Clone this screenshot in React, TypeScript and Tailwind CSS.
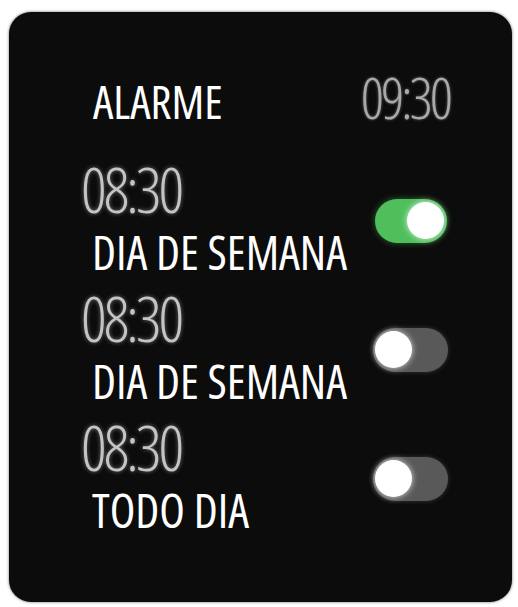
type Alarm = { time: string; label: string; on: boolean };

const alarms: Alarm[] = [
  { time: "08:30", label: "DIA DE SEMANA", on: true },
  { time: "08:30", label: "DIA DE SEMANA", on: false },
  { time: "08:30", label: "TODO DIA", on: false },
];

function Toggle({ on }: { on: boolean }) {
  return (
    <div
      className={
        on
          ? "mt-[9px] mr-[1px] flex h-[44px] w-[72px] items-center justify-end rounded-full bg-[#4fbf5c] px-[3px] shadow-[0_0_6px_rgba(80,190,90,0.5)]"
          : "mt-[9px] flex h-[44px] w-[75px] items-center justify-start rounded-full bg-[#595959] px-[2px] shadow-[0_0_5px_rgba(120,120,120,0.4)]"
      }
    >
      <div className="h-[37px] w-[37px] rounded-full bg-white shadow-[0_0_6px_rgba(255,255,255,0.8)]" />
    </div>
  );
}

export default function App() {
  return (
    <div className="min-h-[607px] w-[518px] bg-white pl-[9px] pt-[12px] font-['Open_Sans',sans-serif]">
      <div className="flex h-[590px] w-[503px] flex-col rounded-[22px] bg-[#0c0c0c] pl-[83px] pr-[64px] shadow-[0_0_3px_rgba(0,0,0,0.6)]">
        <div className="mt-[57px] flex items-baseline justify-between">
          <span className="ml-[1px] text-[46px] leading-[46px] font-medium text-white font-stretch-condensed">
            ALARME
          </span>
          <span className="-mr-[2px] text-[57px] leading-[57px] font-light tracking-[-3px] text-[#a9a9a9] font-stretch-condensed [text-shadow:0_0_3px_rgba(200,200,200,0.5)]">
            09:30
          </span>
        </div>
        <div className="mt-[31px] flex flex-col gap-[11px]">
          {alarms.map((a, i) => (
            <div key={i} className="flex items-center justify-between">
              <div className="flex flex-col">
                <span className="-ml-[11px] text-[63px] leading-[63px] font-light tracking-[-3px] text-[#c4c4c4] font-stretch-condensed [text-shadow:0_0_4px_rgba(220,220,220,0.5)]">
                  {a.time}
                </span>
                <span className="mt-[9px] text-[47px] leading-[46px] font-medium text-white font-stretch-condensed">
                  {a.label}
                </span>
              </div>
              <Toggle on={a.on} />
            </div>
          ))}
        </div>
      </div>
    </div>
  );
}
